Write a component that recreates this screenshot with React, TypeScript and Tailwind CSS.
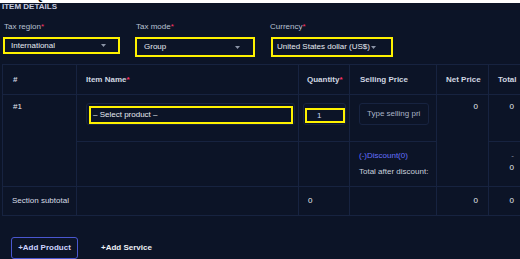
import React from "react";

function Caret() {
  return (
    <svg width="5" height="3" viewBox="0 0 5 3" className="shrink-0">
      <path d="M0 0 L5 0 L2.5 3 Z" fill="#8a93a6" />
    </svg>
  );
}

export default function App() {
  const b = "border border-[#172340]";
  return (
    <div className="w-[520px] h-[259px] overflow-hidden bg-[#0c1427] font-['Liberation_Sans',Arial,sans-serif] text-[8px] leading-[10px] text-[#d0d6e1]">
      <div className="h-[3px] bg-white overflow-hidden">
        <div className="-mt-[9px] pl-[2px] text-[11px] leading-[11px] font-bold text-black whitespace-nowrap tracking-[1px]">
          NEW QUOTATION FORM FOR CUSTOMER - SALES DETAILS
        </div>
      </div>

      <div className="pl-[2px] leading-[8px] font-bold text-[#c5cce0]">ITEM DETAILS</div>

      <div className="mt-[11px] flex pl-[3px]">
        <div className="w-[132px]">
          <div className="pl-[1px] text-[#b9c2d3]">
            Tax region<span className="text-[#ff3366]">*</span>
          </div>
          <div className="mt-[5px] h-[17px] w-[117px] border-2 border-[#fff200] flex items-center pl-[6px] pr-[12px] justify-between text-[#e6eaf0]">
            <span>International</span>
            <Caret />
          </div>
        </div>
        <div className="w-[136px]">
          <div className="pl-[1px] text-[#b9c2d3]">
            Tax mode<span className="text-[#ff3366]">*</span>
          </div>
          <div className="mt-[5px] h-[20px] w-[120px] border-2 border-[#fff200] flex items-center pl-[7px] pr-[13px] justify-between text-[#e6eaf0]">
            <span>Group</span>
            <Caret />
          </div>
        </div>
        <div className="w-[130px]">
          <div className="-ml-[1px] text-[#b9c2d3]">
            Currency<span className="text-[#ff3366]">*</span>
          </div>
          <div className="mt-[5px] h-[20px] w-[122px] border-2 border-[#fff200] flex items-center pl-[4px] gap-[1px] text-[#e6eaf0]">
            <span>United States dollar (US$)</span>
            <Caret />
          </div>
        </div>
      </div>

      <div className="pl-[2px] mt-[7px]">
        <table className="table-fixed border-collapse w-[522px]">
          <colgroup>
            <col className="w-[74px]" />
            <col className="w-[222px]" />
            <col className="w-[51px]" />
            <col className="w-[87px]" />
            <col className="w-[52px]" />
            <col className="w-[36px]" />
          </colgroup>
          <thead>
            <tr className="h-[30px]">
              <th className={`${b} pl-[10px] text-left font-bold align-middle`}>#</th>
              <th className={`${b} pl-[9px] text-left font-bold align-middle`}>
                Item Name<span className="text-[#ff3366]">*</span>
              </th>
              <th className={`${b} pl-[8px] text-left font-bold align-middle`}>
                Quantity<span className="text-[#ff3366]">*</span>
              </th>
              <th className={`${b} pl-[10px] text-left font-bold align-middle`}>Selling Price</th>
              <th className={`${b} pl-[9px] text-left font-bold align-middle whitespace-nowrap`}>Net Price</th>
              <th className={`${b} pl-[9px] text-left font-bold align-middle`}>Total</th>
            </tr>
          </thead>
          <tbody>
            <tr className="h-[47px]">
              <td rowSpan={2} className={`${b} align-top pl-[10px] pt-[7px] text-[#e6eaf0]`}>#1</td>
              <td className={`${b} align-top pl-[9px] pt-[8px]`}>
                <div className="relative h-[22px] w-[209px] border border-[#172340] rounded-[3px]">
                  <div className="absolute left-[2px] top-[2px] h-[18px] w-[204px] border-2 border-[#fff200] flex items-center pl-[2px] text-[#e6eaf0]">
                    – Select product –
                  </div>
                </div>
              </td>
              <td className={`${b} align-top pl-[4px] pt-[8px]`}>
                <div className="relative h-[22px] w-[43px] border border-[#172340] rounded-[3px]">
                  <div className="absolute left-[1px] top-[4px] h-[15px] w-[40px] border-2 border-[#fff200] flex items-center pl-[10px] text-[#c9d6f5]">
                    1
                  </div>
                </div>
              </td>
              <td className={`${b} align-top pl-[9px] pt-[8px]`}>
                <div className="h-[22px] w-[70px] border border-[#172340] rounded-[3px] flex items-center pl-[7px] text-[#a9b3c6] whitespace-nowrap overflow-hidden">
                  Type selling pri
                </div>
              </td>
              <td rowSpan={2} className={`${b} align-top text-right pr-[10px] pt-[7px] text-[#e6eaf0]`}>0</td>
              <td className={`${b} align-top text-right pr-[10px] pt-[7px] text-[#e6eaf0]`}>0</td>
            </tr>
            <tr className="h-[45px]">
              <td className={b}></td>
              <td className={b}></td>
              <td className={`${b} align-top pl-[9px] pt-[9px]`}>
                <div className="text-[#6571ff]">(-)Discount(0)</div>
                <div className="mt-[6px] text-[#c9d0dc] whitespace-nowrap">Total after discount:</div>
              </td>
              <td className={`${b} align-top text-right pr-[10px] pt-[8px] leading-[12px] text-[#e6eaf0]`}>
                <div className="text-[#8a93a6]">-</div>
                <div>0</div>
              </td>
            </tr>
            <tr className="h-[29px]">
              <td className={`${b} pl-[9px] align-middle whitespace-nowrap text-[#d7dce5]`}>Section subtotal</td>
              <td className={b}></td>
              <td className={`${b} pl-[9px] align-middle text-[#e6eaf0]`}>0</td>
              <td className={b}></td>
              <td className={`${b} text-right pr-[10px] align-middle text-[#e6eaf0]`}>0</td>
              <td className={`${b} text-right pr-[10px] align-middle text-[#e6eaf0]`}>0</td>
            </tr>
          </tbody>
        </table>
      </div>

      <div className="mt-[21px] flex items-center pl-[11px]">
        <div className="h-[22px] w-[67px] border border-[#4a57d0] rounded-[3px] flex items-center justify-center font-bold text-[#cdd3ff]">
          +Add Product
        </div>
        <div className="ml-[23px] font-bold text-[#eef0f5]">+Add Service</div>
      </div>
    </div>
  );
}
